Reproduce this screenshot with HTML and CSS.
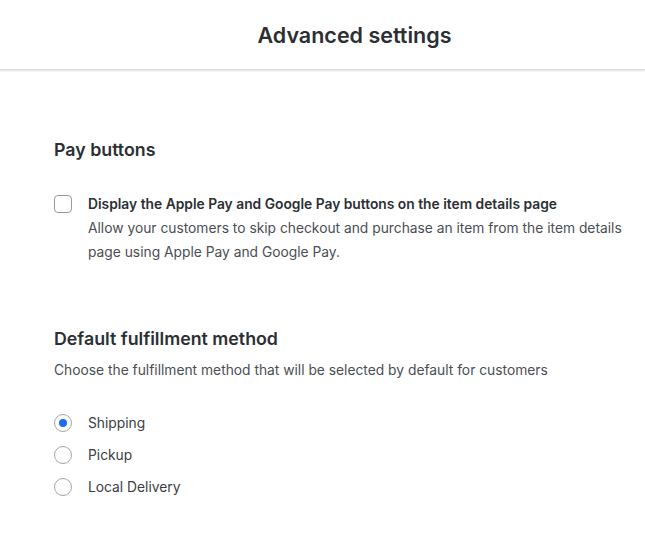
FILE: index.html
```html
<!DOCTYPE html>
<html lang="en">
<head>
  <meta charset="UTF-8" />
  <meta name="viewport" content="width=device-width, initial-scale=1" />
  <title>Advanced settings</title>
  <link rel="stylesheet" href="styles.css">
</head>
<body>

  <header class="topbar">
    <h1>Advanced settings</h1>
  </header>

  <main class="content">

    <section class="section pay-buttons">
      <h2>Pay buttons</h2>
      <label class="check-row">
        <span class="checkbox"></span>
        <span class="check-text">
          <strong>Display the Apple Pay and Google Pay buttons on the item details page</strong>
          <span class="help">Allow your customers to skip checkout and purchase an item from the item details page using Apple Pay and Google Pay.</span>
        </span>
      </label>
    </section>

    <section class="section fulfillment">
      <h2>Default fulfillment method</h2>
      <p class="subtitle">Choose the fulfillment method that will be selected by default for customers</p>
      <ul class="radio-list">
        <li><span class="radio checked"></span>Shipping</li>
        <li><span class="radio"></span>Pickup</li>
        <li><span class="radio"></span>Local Delivery</li>
      </ul>
    </section>

  </main>

</body>
</html>
```

FILE: styles.css
```css
* {
  box-sizing: border-box;
  margin: 0;
  padding: 0;
}

body {
  font-family: Inter, 'Noto Sans', sans-serif;
  background-color: #fff;
  color: #373b40;
}

.topbar {
  height: 70px;
  display: flex;
  align-items: center;
  justify-content: center;
  padding-left: 64px;
  border-bottom: 1px solid #dcdcdc;
  box-shadow: 0 1px 2px rgba(0, 0, 0, 0.12);
}

.topbar h1 {
  font-size: 21.5px;
  font-weight: 600;
  color: #2b2f33;
}

.content {
  padding: 68px 10px 0 54px;
}

.section h2 {
  font-size: 17.8px;
  font-weight: 600;
  color: #2b2f33;
  line-height: 24px;
}

.pay-buttons {
  margin-bottom: 63px;
}

.check-row {
  display: flex;
  gap: 16px;
  margin-top: 30px;
}

.checkbox {
  flex: none;
  width: 18px;
  height: 18px;
  margin-top: 3px;
  border: 1px solid #9a9a9a;
  border-radius: 4px;
}

.check-text {
  font-size: 13.8px;
  line-height: 24px;
}

.check-text strong {
  display: block;
  font-weight: 600;
  color: #2b2f33;
}

.help {
  display: block;
  color: #4a4e53;
}

.subtitle {
  font-size: 13.8px;
  line-height: 24px;
  margin-top: 7px;
  color: #4a4e53;
}

.radio-list {
  list-style: none;
  margin-top: 25px;
}

.radio-list li {
  display: flex;
  align-items: center;
  gap: 16px;
  height: 32px;
  font-size: 13.8px;
  color: #3a3e43;
}

.radio {
  width: 18px;
  height: 18px;
  border: 1px solid #a5a5a5;
  border-radius: 50%;
  display: flex;
  align-items: center;
  justify-content: center;
}

.radio.checked::after {
  content: "";
  width: 8px;
  height: 8px;
  border-radius: 50%;
  background: #1a6cf0;
}
```
